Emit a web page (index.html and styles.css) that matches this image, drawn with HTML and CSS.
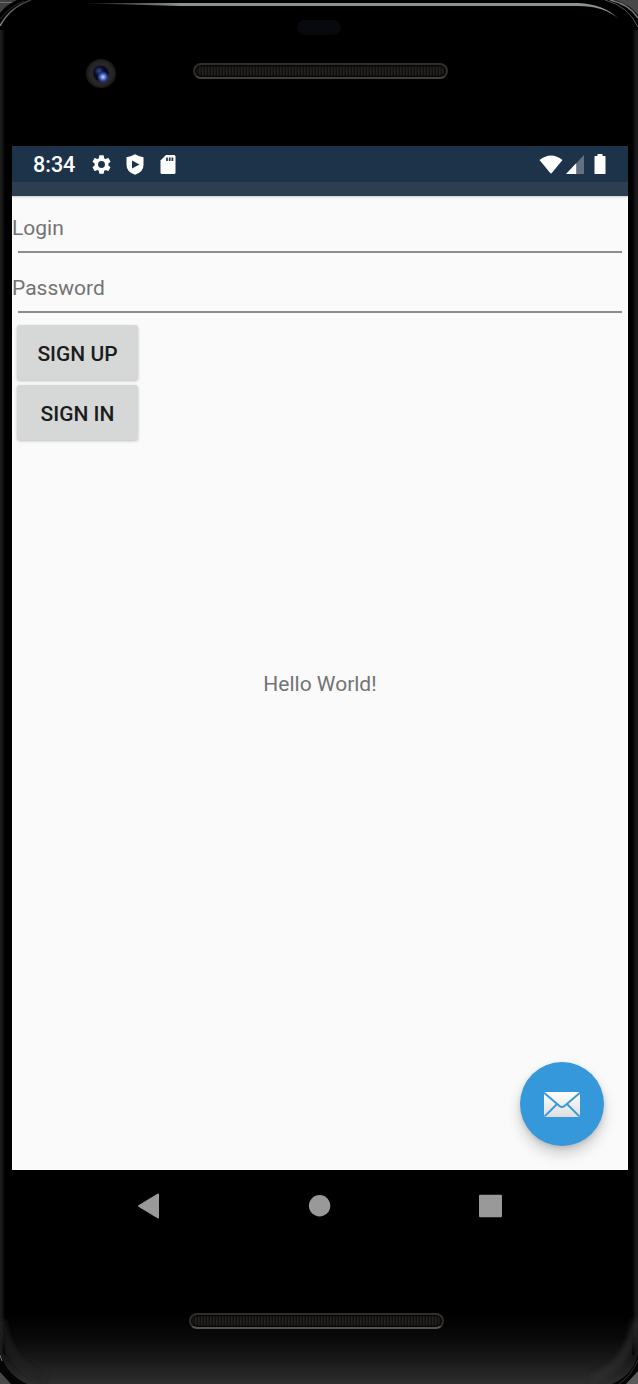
FILE: index.html
```
<!DOCTYPE html>
<html lang="en">
<head>
<meta charset="utf-8">
<title>Login</title>
<link rel="stylesheet" href="styles.css">
</head>
<body>
<div class="phone">
  <svg class="shell" viewBox="0 0 638 1384" aria-hidden="true">
    <defs>
      <linearGradient id="chin" x1="0" y1="0" x2="0" y2="1">
        <stop offset="0" stop-color="#000"/><stop offset=".35" stop-color="#0a0a0a"/><stop offset=".65" stop-color="#191919"/><stop offset="1" stop-color="#2d2d2d"/>
      </linearGradient>
      <linearGradient id="sideL"><stop offset="0" stop-color="#1e1e1e"/><stop offset=".45" stop-color="#151515"/><stop offset="1" stop-color="#000"/></linearGradient>
      <linearGradient id="sideR"><stop offset="0" stop-color="#000"/><stop offset=".6" stop-color="#151515"/><stop offset="1" stop-color="#1c1c1c"/></linearGradient>
      <linearGradient id="shine" gradientUnits="userSpaceOnUse" x1="74" y1="0" x2="180" y2="0"><stop offset="0" stop-color="#8b9491" stop-opacity="0"/><stop offset="1" stop-color="#8b9491"/></linearGradient>
      <linearGradient id="rim" gradientUnits="userSpaceOnUse" x1="0" y1="30" x2="32" y2="0"><stop offset="0" stop-color="#8a8a8a"/><stop offset=".5" stop-color="#606060"/><stop offset="1" stop-color="#333"/></linearGradient>
      <filter id="soft" x="-50%" y="-50%" width="200%" height="200%"><feGaussianBlur stdDeviation="3"/></filter>
    </defs>
    <rect y="1315" width="638" height="69" fill="url(#chin)"/>
    <rect y="30" width="5" height="1325" fill="url(#sideL)"/>
    <rect x="632" y="30" width="6" height="1325" fill="url(#sideR)"/>
    <path d="M0 0H17Q6 5 0 13Z" fill="#404040"/>
    <path d="M0 2.500H12" stroke="#707070"/>
    <path d="M0 19Q9 7 24 1" fill="none" stroke="#2a2a2a" stroke-width="1"/>
    <path d="M0 26Q10 7 31 0" fill="none" stroke="url(#rim)" stroke-width="1.600"/>
    <path d="M615 0H638V15Q629 4 615 0Z" fill="#484848"/>
    <path d="M610 0Q629 4 638 18" fill="none" stroke="#777" stroke-width="1.500"/>
    <path d="M605 0Q628 6 638 27" fill="none" stroke="#555" stroke-width="1"/>
    <path d="M74 3H578Q604 4 619 19Q604 6 578 6H180Z" fill="url(#shine)"/>
    <path d="M2 1320Q8 1365 45 1379" fill="none" stroke="#242424" stroke-width="5" filter="url(#soft)"/>
    <path d="M636 1320Q630 1365 592 1379" fill="none" stroke="#303030" stroke-width="5" filter="url(#soft)"/>
    <path d="M0 1353Q7 1375 27 1384H0Z" fill="#050505"/>
    <path d="M0 1372L11 1384H0Z" fill="#484848"/>
    <path d="M0 1355L2 1361" stroke="#777"/>
    <path d="M638 1355Q632 1376 612 1384H638Z" fill="#050505"/>
    <path d="M638 1371L626 1384H638Z" fill="#5a5a5a"/>
    <path d="M638 1360Q632 1375 619 1384" fill="none" stroke="#333"/>
  </svg>

  <header class="forehead">
    <div class="sensor"></div>
    <div class="hardware">
      <div class="camera"></div>
      <div class="speaker"></div>
    </div>
  </header>

  <main class="screen">
    <div class="status">
      <span class="clock">8:34</span>
      <svg class="icon gear" viewBox="0 0 24 24"><path fill="#fff" d="M19.140 12.940c.04-.3.06-.61.06-.94s-.02-.64-.07-.94l2.030-1.580a.49.49 0 0 0 .12-.61l-1.920-3.320a.49.49 0 0 0-.59-.22l-2.390.96a7 7 0 0 0-1.620-.94l-.36-2.540A.48.48 0 0 0 13.920 2.400h-3.840c-.24 0-.43.17-.47.41l-.36 2.540c-.59.24-1.130.57-1.620.94l-2.390-.96a.48.48 0 0 0-.59.22L2.740 8.870a.48.48 0 0 0 .12.61l2.030 1.580A6.600 6.600 0 0 0 4.800 12c0 .31.02.64.07.94l-2.030 1.580a.49.49 0 0 0-.12.61l1.920 3.320c.12.22.37.29.59.22l2.390-.96c.5.38 1.030.7 1.620.94l.36 2.540c.05.24.24.41.48.41h3.840c.24 0 .44-.17.47-.41l.36-2.540c.59-.24 1.130-.56 1.620-.94l2.390.96c.22.08.47 0 .59-.22l1.920-3.320a.48.48 0 0 0-.12-.61zM12 15.600A3.600 3.600 0 1 1 12 8.400a3.600 3.600 0 0 1 0 7.200z"/></svg>
      <svg class="icon shield" viewBox="0 0 18 21"><path fill="#fff" fill-rule="evenodd" d="M9 .3Q13.500 2.700 17.500 3.200V11Q17.500 18 9 20.700Q.5 18 .5 11V3.200Q4.500 2.700 9 .3ZM6 6.500V14.500L13.500 10.500Z"/></svg>
      <svg class="icon sd" viewBox="0 0 16 19"><path fill="#fff" d="M6 0H14Q15.500 0 15.500 1.500V17.500Q15.500 19 14 19H2Q.5 19 .5 17.500V5.500Z"/><path d="M7 2.500V6M9.700 2.500V6M12.400 2.500V6" stroke="#1d334a" stroke-width="1.700"/></svg>
      <span class="spacer"></span>
      <svg class="icon wifi" viewBox="0 0 24 19"><path fill="#fff" d="M.5 5Q12-4 23.500 5L13 17.800Q12 19 11 17.800Z"/></svg>
      <svg class="icon signal" viewBox="0 0 18 19"><path fill="#62707f" d="M18 0V19H0Z"/><path fill="#fff" d="M10.200 8.200V19H0Z"/></svg>
      <svg class="icon battery" viewBox="0 0 12 20"><path fill="#fff" d="M3.500 0H8.500V2H11Q11.500 2 11.500 2.500V19.500Q11.500 20 11 20H1Q.5 20 .5 19.500V2.500Q.5 2 1 2H3.500Z"/></svg>
    </div>
    <div class="appbar"></div>
    <form class="content">
      <label class="field">Login</label>
      <label class="field">Password</label>
      <button class="button" type="button">SIGN UP</button>
      <button class="button" type="button">SIGN IN</button>
      <p class="greeting">Hello World!</p>
      <button class="fab" type="button" aria-label="Mail">
        <svg class="mail" viewBox="0 0 36 25">
          <defs><linearGradient id="paper" x1="0" y1="0" x2="0" y2="1"><stop offset="0" stop-color="#fff"/><stop offset="1" stop-color="#dedede"/></linearGradient></defs>
          <rect width="36" height="25" rx="1" fill="url(#paper)"/>
          <path d="M0 .8L15.500 14Q18 16 20.500 14L36 .8M.5 24.500L13 12M35.500 24.500L23 12" fill="none" stroke="#3498db" stroke-width="1.900"/>
        </svg>
      </button>
    </form>
  </main>

  <nav class="nav">
    <svg class="key" viewBox="0 0 24 26"><path d="M21 1.500V24.500L2 13Z" fill="#999" stroke="#999" stroke-width="2" stroke-linejoin="round"/></svg>
    <svg class="key" viewBox="0 0 24 26"><circle cx="11.600" cy="12.800" r="10.700" fill="#999"/></svg>
    <svg class="key" viewBox="0 0 24 26"><rect x="0" y="1.700" width="23" height="22.500" rx="1.200" fill="#999"/></svg>
  </nav>
  <footer class="chin"><div class="speaker"></div></footer>
</div>
</body>
</html>
```
FILE: styles.css
```
* { box-sizing: border-box; }
body { margin: 0; background: #000; font-family: Roboto, sans-serif; }
.phone { position: relative; display: flex; flex-direction: column; width: 638px; height: 1384px; overflow: hidden; background: #000; }
.shell { position: absolute; inset: 0; width: 638px; height: 1384px; }
.forehead { position: relative; height: 146px; padding-top: 20px; }
.sensor { width: 44px; height: 15px; margin-left: 297px; border-radius: 8px; background: #07090d; }
.hardware { display: flex; align-items: center; gap: 77px; padding: 24px 0 0 86px; }
.camera { width: 30px; height: 29px; border-radius: 50%; background: radial-gradient(circle at 17px 18px, #c3d5ff 0, #6f8ce0 2px, #2b3f93 4px, transparent 6px), radial-gradient(circle at 13px 12px, #3c4a91 0, #0d1335 4px, transparent 6px), radial-gradient(circle, #070a1b 0 7px, #2a2727 8.500px, #262424 12px, #1b1919 14px); }
.speaker { width: 255px; height: 16px; border: 2px solid #302e2c; border-bottom-color: #55524f; border-radius: 8px; background: repeating-linear-gradient(90deg, #12100e 0 1px, #242120 1px 2px, #1c1916 2px 3px); box-shadow: inset 0 0 2px 1px #000; }
.hardware .speaker { margin-top: -5px; border-bottom-color: #42403e; }
.screen { position: relative; display: flex; flex-direction: column; width: 616px; height: 1024px; margin-left: 12px; background: #fafafa; }
.status { display: flex; align-items: center; height: 36px; padding: 0 21px; background: #1d334a; color: #fff; }
.clock { width: 57px; font-size: 21.500px; font-weight: 500; line-height: 36px; padding-top: 2px; }
.icon { display: block; flex: none; }
.gear { width: 23px; height: 23px; }
.shield { width: 18px; height: 21px; margin-left: 13px; }
.sd { width: 16px; height: 19px; margin-left: 16px; }
.spacer { flex: 1; }
.wifi { width: 24px; height: 19px; }
.signal { width: 18px; height: 19px; margin-left: 3px; }
.battery { width: 12px; height: 20px; margin: 0 1px 0 10px; }
.appbar { height: 14px; background: #2c3e50; box-shadow: 0 1px 2px rgba(0,0,0,.2); }
.content { flex: 1; display: flex; flex-direction: column; align-items: flex-start; }
.field { display: flex; align-items: center; position: relative; width: 616px; height: 60px; padding-top: 4px; color: #737373; font-size: 21px; }
.field::after { content: ""; position: absolute; left: 6px; right: 6px; bottom: 3px; height: 2px; background: #8c8c8c; }
.button { width: 121px; height: 55px; margin: 9px 0 0 5px; padding: 3px 0 0; border: 0; border-radius: 3px; background: #d6d7d7; box-shadow: 0 1px 3px rgba(0,0,0,.25); color: #1c1c1c; font: 500 21px Roboto, sans-serif; }
.button + .button { margin-top: 5px; }
.greeting { align-self: center; margin: 231px 0 0; color: #737373; font-size: 21px; line-height: 26px; }
.fab { display: flex; align-items: center; justify-content: center; align-self: flex-end; width: 84px; height: 84px; margin: auto 24px 24px 0; padding: 0; border: 0; border-radius: 50%; background: #3498db; box-shadow: 0 8px 14px rgba(0,0,0,.18), 0 2px 5px rgba(0,0,0,.12); }
.mail { width: 36px; height: 25px; }
.nav { position: relative; display: flex; align-items: center; gap: 147px; height: 72px; padding-left: 137px; }
.key { width: 24px; height: 26px; }
.chin { position: relative; padding: 71px 0 0 189px; }
```
